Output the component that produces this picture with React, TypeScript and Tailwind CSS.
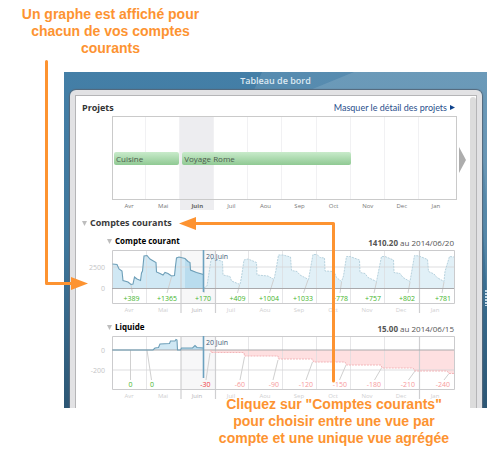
import React from "react";

const months = ["Avr", "Mai", "Juin", "Juil", "Aou", "Sep", "Oct", "Nov", "Dec", "Jan"];

type Point = [number, number];

type Mark = { label: string; x: number; from: Point; to: Point; color: string };

type Account = {
  name: string;
  amount: string;
  date: string;
  zero: number;
  guide: number;
  guideLabel: string;
  todayEnd: number;
  past: Point[];
  future: Point[];
  futureFill: string;
  futureStroke: string;
  marks: Mark[];
};

const green = "#45b52c";
const red = "#f0383c";
const paleRed = "#f79a9c";

const accounts: Account[] = [
  {
    name: "Compte courant",
    amount: "1410.20",
    date: "2014/06/20",
    zero: 38.5,
    guide: 17,
    guideLabel: "2500",
    todayEnd: 42,
    past: [
      [0.5, 14], [5, 14.5], [7, 19], [10, 21], [11, 30.5], [16, 32], [19, 34.5], [21, 34], [22.5, 27], [25, 29],
      [28.5, 30.5], [29.5, 23], [30.5, 21], [32, 6], [35, 5.5], [38, 9], [44, 12.5], [44.5, 22], [48, 23.5],
      [51, 25], [53, 22.5], [56, 23.5], [59.5, 26], [62.5, 25.5], [63.5, 16], [64.5, 8], [67, 7], [73, 8.5],
      [76, 11.5], [78, 12.5], [78.5, 20], [84.5, 22.5], [91.5, 24.5],
    ],
    future: [
      [92, 38], [95, 36], [97, 23], [99, 10], [101, 8], [110.5, 11.5], [111, 25], [118, 26.5], [119.5, 31],
      [128, 34.5], [129.5, 27], [132, 10], [136, 9], [144.5, 12.5], [145, 25], [156, 26], [162, 29.5],
      [164, 20], [166.5, 5], [171, 5], [178.5, 7], [179.5, 20.5], [185, 21.5], [188, 25], [196.5, 29.5],
      [201, 4.5], [205, 4.5], [208, 7.5], [212.5, 8], [213, 21], [222, 21.5], [224.5, 27.5], [229.5, 31.5],
      [231.5, 26], [234.5, 6.5], [238, 6.5], [247.5, 10], [248, 22.5], [253, 23.5], [256, 27.5], [264.5, 31.5],
      [269.5, 6.5], [273, 6.5], [281.5, 10], [282, 22.5], [288, 23.5], [291, 27.5], [298, 31.5], [302.5, 5.5],
      [307, 6], [315.5, 9.5], [316.5, 21.5], [322, 24], [325, 27.5], [332, 31.5], [333, 21.5], [337.5, 6.5],
      [342, 7],
    ],
    futureFill: "#e1f0f7",
    futureStroke: "#b7d2de",
    marks: [
      { label: "+389", x: 19.5, from: [19, 35], to: [20.5, 43], color: green },
      { label: "+1365", x: 55, from: [59.5, 27], to: [55, 43], color: green },
      { label: "+170", x: 91, from: [92, 39], to: [92, 43], color: green },
      { label: "+409", x: 125.5, from: [127.5, 35], to: [125.5, 43], color: green },
      { label: "+1004", x: 157, from: [161.5, 30], to: [157.5, 43], color: green },
      { label: "+1033", x: 191, from: [196, 30], to: [191.5, 43], color: green },
      { label: "+778", x: 228, from: [229.5, 32], to: [228, 43], color: green },
      { label: "+757", x: 261, from: [264.5, 32], to: [262, 43], color: green },
      { label: "+802", x: 295, from: [298, 32], to: [296, 43], color: green },
      { label: "+781", x: 331, from: [332, 32], to: [330, 43], color: green },
    ],
  },
  {
    name: "Liquide",
    amount: "15.00",
    date: "2014/06/15",
    zero: 14,
    guide: 34,
    guideLabel: "-200",
    todayEnd: 42,
    past: [
      [0.5, 14], [41, 14], [43, 12], [46.5, 11.5], [48, 8], [57.5, 7.5], [58.5, 5], [63, 5], [64, 3.5],
      [65, 4], [65.5, 14], [68.5, 14], [69.5, 12], [80.5, 12], [83, 9.5], [85, 11.5], [91.5, 12],
    ],
    future: [
      [99, 14], [99, 16.5], [132, 16.5], [132.5, 20], [166, 20], [166.5, 23], [200.5, 23], [201.5, 26],
      [233, 26], [234.5, 29], [269, 29], [270, 32], [301, 32], [303, 35], [335, 35], [337, 37.5], [342, 37.5],
    ],
    futureFill: "#fee0e1",
    futureStroke: "#f3b5b8",
    marks: [
      { label: "0", x: 18.5, from: [18.5, 14], to: [18.5, 44], color: green },
      { label: "0", x: 40, from: [35, 14], to: [39.5, 44], color: green },
      { label: "-30", x: 93.5, from: [98, 17], to: [94, 44], color: red },
      { label: "-60", x: 128, from: [132.5, 21], to: [128, 44], color: paleRed },
      { label: "-90", x: 162, from: [166, 24], to: [161, 44], color: paleRed },
      { label: "-120", x: 194, from: [200.5, 26], to: [194, 44], color: paleRed },
      { label: "-150", x: 228, from: [234, 29], to: [227.5, 44], color: paleRed },
      { label: "-180", x: 262, from: [269.5, 32], to: [262.5, 44], color: paleRed },
      { label: "-210", x: 296, from: [303, 35], to: [296.5, 44], color: paleRed },
      { label: "-240", x: 331, from: [337, 37.5], to: [332, 44], color: paleRed },
    ],
  },
];

const line = (points: Point[]) => points.map((p) => p.join(",")).join(" ");

function area(points: Point[], zero: number) {
  const first = points[0][0];
  const last = points[points.length - 1][0];
  return `${first},${zero} ${line(points)} ${last},${zero}`;
}

function AccountChart({ account }: { account: Account }) {
  const { zero, guide, past, future } = account;
  return (
    <svg viewBox="-36 0 394 67" className="mt-px block w-full text-[7px]" role="img" aria-label={account.name}>
      <rect x="69" y="1" width="34" height="52" fill="#f7f7f8" />
      <polygon points={area(past, zero)} fill="#d0e8f4" />
      <polygon points={area(past.filter((p) => p[0] >= 69), zero)} fill="#b9dcee" />
      <polygon points={area(future, zero)} fill={account.futureFill} />
      {[34.5, 136.5, 170.5, 204.5, 238.5, 272.5].map((x) => (
        <path key={x} d={`M${x} 1V53`} stroke="#dcdcde" strokeOpacity="0.7" />
      ))}
      <path d={`M1 ${guide}H342`} stroke="#d5d5d7" strokeOpacity="0.8" strokeWidth="1.2" />
      <path d="M69 0V63M103.5 0V63M307.5 -4V63" stroke="#cfcfd1" strokeWidth="1.2" />
      <path d="M0.5 0.5H342.5V53.5H0.5Z" fill="none" stroke="#cbcbcd" />
      {account.marks.map((m) => (
        <path key={m.x} d={`M${m.from.join(" ")}L${m.to.join(" ")}`} stroke="#d0d0d0" />
      ))}
      <path d={`M0 ${zero}H342`} stroke="#a9a9ac" />
      <polyline points={line(future)} fill="none" stroke={account.futureStroke} strokeDasharray="2 1" />
      <polyline points={line(past)} fill="none" stroke="#6e9fb8" strokeWidth="1.1" />
      <path d={`M91.5 0V${account.todayEnd}`} stroke="#6ba1bf" strokeWidth="1.6" />
      <g fill="#c4c4c6" textAnchor="end">
        <text x="-7" y={zero + 2.5}>0</text>
        <text x="-7" y={guide + 2.5}>{account.guideLabel}</text>
      </g>
      <text x="94" y="9" fill="#3f6079" className="font-medium">20 Juin</text>
      <g textAnchor="middle">
        {account.marks.map((m) => (
          <text key={m.x} x={m.x} y="51" fill={m.color}>{m.label}</text>
        ))}
        {months.map((m, i) => (
          <text key={m} x={17 + 34 * i} y="62" fill={m === "Juin" ? "#b4b4b6" : "#cfcfd1"} className="text-[6px]">
            {m}
          </text>
        ))}
      </g>
    </svg>
  );
}

function Disclosure({ children, className }: { children: React.ReactNode; className: string }) {
  return (
    <button type="button" className={`flex items-center gap-[3px] leading-4 font-bold ${className}`}>
      <svg viewBox="0 0 5 5" className="size-[5px]" aria-hidden="true">
        <path d="M0 0H5L2.5 5Z" fill="#bdbdbd" />
      </svg>
      {children}
    </button>
  );
}

function Projects() {
  return (
    <section>
      <header className="flex items-center justify-between pt-1 pr-[15px] pl-1.5 text-[9px] leading-4">
        <h2 className="font-bold text-[#333]">Projets</h2>
        <button type="button" className="flex items-center gap-[3px] font-['Lato','Noto_Sans',sans-serif] text-[#2a4f8c]">
          Masquer le détail des projets
          <svg viewBox="0 0 5 5" className="mb-0.5 size-[5px]" aria-hidden="true">
            <path d="M0 0L5 2.5L0 5Z" fill="#0f438c" />
          </svg>
        </button>
      </header>
      <div className="flex pl-9">
        <div className="grid flex-1 grid-cols-[repeat(10,34fr)_4fr] grid-rows-[84px_10px]">
          <div className="col-start-3 row-span-2 row-start-1 bg-[#ededf0]" />
          {months.map((m, i) => (
            <div
              key={m}
              style={{ gridColumnStart: i + 1 }}
              className={`row-start-1 border-[#f1f1f3] ${i < 9 ? "border-r" : ""}`}
            />
          ))}
          <div className="col-span-full row-start-1 border border-[#cacaca]" />
          <div className="col-span-2 col-start-1 row-start-1 mr-px ml-0.5 h-[13px] self-center rounded-xs bg-linear-to-b from-[#c9ebcb] to-[#8fc993] pl-0.5 text-[8px] leading-[13px] text-[#4c5c4d]">
            Cuisine
          </div>
          <div className="col-span-5 col-start-3 row-start-1 ml-0.5 h-[13px] self-center rounded-xs bg-linear-to-b from-[#c9ebcb] to-[#8fc993] pl-0.5 text-[8px] leading-[13px] text-[#4c5c4d]">
            Voyage Rome
          </div>
          {months.map((m, i) => (
            <span
              key={m}
              style={{ gridColumnStart: i + 1 }}
              className={`row-start-2 text-center text-[6px] leading-3 ${m === "Juin" ? "font-bold text-[#666]" : "text-[#777]"}`}
            >
              {m}
            </span>
          ))}
        </div>
        <button type="button" aria-label="Mois suivants" className="mr-1 ml-0.5 flex h-[84px] items-center pt-1">
          <svg viewBox="0 0 7 26" className="h-[26px] w-[7px]">
            <path d="M0 0L7 13L0 26Z" fill="#adadad" />
          </svg>
        </button>
      </div>
    </section>
  );
}

export default function App() {
  return (
    <main className="relative min-h-screen bg-white pt-1.5 font-['Open_Sans','Noto_Sans',sans-serif]">
      <p className="ml-5 w-[181px] text-center font-['Liberation_Sans',Arial,sans-serif] text-[14px] leading-[17px] font-bold text-[#fd9331]">
        Un graphe est affiché pour<br />chacun de vos comptes<br />courants
      </p>

      <div className="relative mt-[15px] mr-px ml-16 overflow-hidden bg-linear-to-b from-[#447fa7] via-[#3f779c] to-[#2c5674]">
        <svg className="absolute top-0 left-0 h-full w-full" viewBox="0 0 423 336" preserveAspectRatio="none" aria-hidden="true">
          <path d="M198 0H423V140Q418 60 408 18H190Z" fill="#fff" fillOpacity="0.1" />
          <path d="M290 0H423V230L412 18H246Z" fill="#fff" fillOpacity="0.12" />
          <path d="M422 218V234" stroke="#c7dbe8" strokeWidth="2" strokeDasharray="2 1" />
        </svg>
        <h1 className="relative h-[18px] text-center text-[9px] leading-[18px] font-semibold text-[#dce9f2]">
          Tableau de bord
        </h1>
        <div className="relative mr-[5px] ml-1.5 rounded-t-md border-x-[5px] border-t-[5px] border-[#e2e2e4] shadow-[0_0_1px_1px_#55687a]">
          <div className="flex border-x border-t border-[#b5b5b7] bg-white">
            <div className="min-w-0 flex-1 pb-[5px]">
              <Projects />
              <section className="pt-[5px]">
                <Disclosure className="ml-1.5 text-[9px] text-[#3a3a3a]">Comptes courants</Disclosure>
                {accounts.map((account) => (
                  <article key={account.name} className="pt-0.5">
                    <header className="flex items-end justify-between pr-4 text-[8px]">
                      <Disclosure className="ml-[31px] text-black">{account.name}</Disclosure>
                      <span className="leading-3 text-[#555]">
                        <b>{account.amount}</b> au {account.date}
                      </span>
                    </header>
                    <AccountChart account={account} />
                  </article>
                ))}
              </section>
            </div>
            <div className="mt-px w-[6px] rounded-t-full bg-[#dcdcdc]" />
          </div>
        </div>
      </div>

      <p className="relative -mt-3 ml-[212px] w-[244px] text-center font-['Liberation_Sans',Arial,sans-serif] text-[14px] leading-[17px] font-bold text-[#fd9331]">
        Cliquez sur "Comptes courants"<br />pour choisir entre une vue par<br />compte et une unique vue agrégée
      </p>

      <svg className="pointer-events-none absolute top-0 left-0" width="488" height="459" aria-hidden="true">
        <g fill="none" stroke="#fd9331" strokeWidth="3" strokeLinecap="round" strokeLinejoin="round">
          <path d="M46.5 61.5V283.5H72" />
          <path d="M194 223.5H333.5V381" />
        </g>
        <path d="M71 277L88 283.5L71 290Z M196 217L179 223.5L196 230Z" fill="#fd9331" />
      </svg>
    </main>
  );
}
